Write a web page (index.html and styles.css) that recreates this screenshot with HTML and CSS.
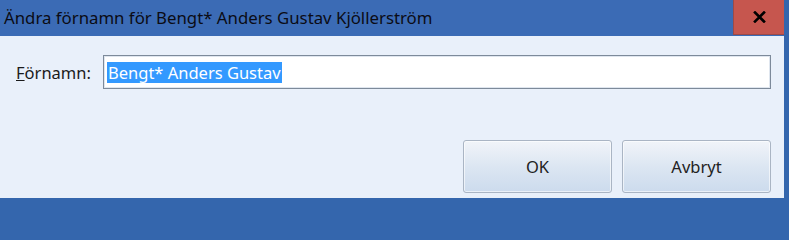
FILE: index.html
```html
<!DOCTYPE html>
<html lang="sv">
<head>
<meta charset="utf-8">
<title>Ändra förnamn</title>
<link rel="stylesheet" href="styles.css">
</head>
<body>
<div class="window">
  <div class="titlebar">
    <div class="title">Ändra förnamn för Bengt* Anders Gustav Kjöllerström</div>
    <div class="close"><svg width="13" height="12" viewBox="0 0 13 12"><path d="M2 1.5 L11 10.5 M11 1.5 L2 10.5" stroke="#000" stroke-width="2.6" stroke-linecap="square"/></svg></div>
  </div>
  <div class="content">
    <div class="row">
      <label class="label"><span class="acc">F</span>örnamn:</label>
      <div class="textbox"><span class="sel">Bengt* Anders Gustav</span></div>
    </div>
    <div class="buttons">
      <div class="btn">OK</div>
      <div class="btn">Avbryt</div>
    </div>
  </div>
</div>
</body>
</html>
```
FILE: styles.css
```css
html, body {
  margin: 0;
  padding: 0;
  width: 789px;
  height: 202px;
  overflow: hidden;
  background: #3466ad;
}
.window {
  width: 784px;
  height: 198px;
  display: flex;
  flex-direction: column;
  border-right: 5px solid #3466ad;
  border-bottom: 4px solid #3466ad;
  font-family: "Noto Sans", sans-serif;
  color: #1e1e1e;
}
.titlebar {
  height: 36px;
  flex: 0 0 36px;
  display: flex;
  align-items: stretch;
  background: #3b6bb5;
}
.title {
  flex: 1;
  padding-left: 4px;
  font-size: 16.8px;
  line-height: 36px;
  color: #0b0b14;
  white-space: nowrap;
}
.close {
  width: 51px;
  height: 35px;
  background: #c6564e;
  box-sizing: border-box;
  border-left: 1px solid #9b4a48;
  border-bottom: 1px solid #9b4a48;
  display: flex;
  align-items: center;
  justify-content: center;
}
.content {
  flex: 1;
  background: #e9f0fa;
  padding: 19px 13px 5px 16px;
  display: flex;
  flex-direction: column;
}
.row {
  display: flex;
  align-items: center;
  height: 34px;
}
.label {
  font-size: 16.5px;
  width: 87px;
  color: #1a1a1a;
}
.acc {
  text-decoration: underline;
}
.textbox {
  flex: 1;
  height: 34px;
  box-sizing: border-box;
  background: #fff;
  border: 1px solid #7d8a9a;
  box-shadow: inset 0 0 0 1px #dfe6ef;
  padding: 5px 0 0 3px;
  font-size: 16.5px;
}
.sel {
  display: inline-block;
  background: #3399ff;
  color: #fff;
  line-height: 21px;
  height: 21px;
  padding: 0 1px;
}
.buttons {
  margin-top: 51px;
  display: flex;
  justify-content: flex-end;
  gap: 10px;
}
.btn {
  width: 149px;
  height: 53px;
  box-sizing: border-box;
  border: 1px solid #aab5c4;
  border-radius: 3px;
  background: linear-gradient(#f1f4f9, #dce6f2 50%, #ccdbed);
  box-shadow: inset 0 0 0 1px rgba(255,255,255,0.6);
  display: flex;
  align-items: center;
  justify-content: center;
  font-size: 16.5px;
  color: #222;
}
```
